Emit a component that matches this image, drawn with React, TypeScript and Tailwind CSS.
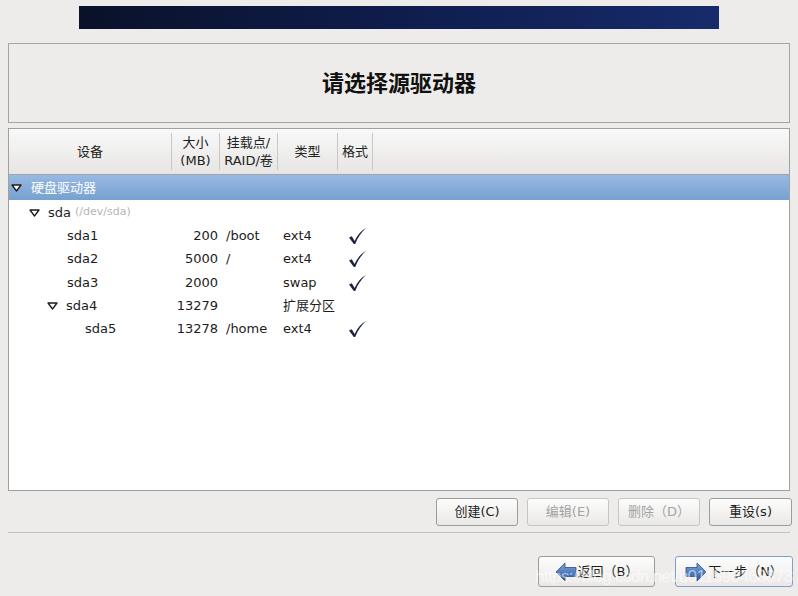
import React from "react";

const font = { fontFamily: '"DejaVu Sans", "Noto Sans CJK SC", sans-serif' };

function Tri({ white = false }: { white?: boolean }) {
  return (
    <svg width="11" height="8" viewBox="0 0 11 8" className="shrink-0">
      <polygon
        points="1,1 10,1 5.5,7"
        fill={white ? "#ffffff" : "none"}
        stroke="#1c1c1c"
        strokeWidth="1.3"
        strokeLinejoin="round"
      />
    </svg>
  );
}

function Check() {
  return (
    <svg width="19" height="18" viewBox="0 0 19 18">
      <path d="M1 10.5 L3.8 9.2 L6.6 14 C9.5 8 13 3.5 18 1 C13.5 5 10 10 7.2 17 L5.8 17 Z" fill="#1d2340" />
    </svg>
  );
}

function Arrow({ dir }: { dir: "left" | "right" }) {
  return (
    <svg width="22" height="20" viewBox="0 0 22 20" className={dir === "left" ? "" : "-scale-x-100"}>
      <defs>
        <linearGradient id={"ag" + dir} x1="0" y1="0" x2="0" y2="1">
          <stop offset="0" stopColor="#7aa5dc" />
          <stop offset="1" stopColor="#2b5a9c" />
        </linearGradient>
      </defs>
      <polygon points="1,10 10,1 10,5.5 21,5.5 21,14.5 10,14.5 10,19" fill={"url(#ag" + dir + ")"} stroke="#2a4f86" strokeWidth="0.8" />
    </svg>
  );
}

type Row = { indent: number; tri?: boolean; name: string; extra?: string; size?: string; mount?: string; type?: string; fmt?: boolean };

const rows: Row[] = [
  { indent: 20, tri: true, name: "sda", extra: "(/dev/sda)" },
  { indent: 58, name: "sda1", size: "200", mount: "/boot", type: "ext4", fmt: true },
  { indent: 58, name: "sda2", size: "5000", mount: "/", type: "ext4", fmt: true },
  { indent: 58, name: "sda3", size: "2000", type: "swap", fmt: true },
  { indent: 38, tri: true, name: "sda4", size: "13279", type: "扩展分区" },
  { indent: 76, name: "sda5", size: "13278", mount: "/home", type: "ext4", fmt: true },
];

function Btn({ children, disabled = false, className = "" }: { children: React.ReactNode; disabled?: boolean; className?: string }) {
  return (
    <button
      className={
        "flex items-center justify-center rounded-[3px] border bg-gradient-to-b from-[#fdfdfd] to-[#e9e8e6] text-[13px] " +
        (disabled ? "border-[#c6c6c4] text-[#a3a3a1] " : "border-[#9c9c9a] text-[#1e1e1e] ") +
        className
      }
    >
      {children}
    </button>
  );
}

export default function App() {
  return (
    <div className="relative w-[798px] h-[596px] bg-[#edecea] flex flex-col overflow-hidden" style={font}>
      <div className="mt-[6px] mx-auto w-[640px] h-[23px] bg-gradient-to-r from-[#0a1129] via-[#0f1d4d] to-[#172b6b]" />

      <div className="mt-[14px] mx-[8px] h-[80px] border border-[#a4a4a2] flex items-center justify-center">
        <h1 className="text-[22px] font-bold text-[#111]">请选择源驱动器</h1>
      </div>

      <div className="mt-[5px] mx-[8px] h-[363px] border border-[#a0a09e] bg-white flex flex-col">
        <div className="h-[46px] border-b border-[#a3a3a1] bg-gradient-to-b from-[#f9f9f9] to-[#e6e5e3] flex text-[13px] text-[#222] leading-[18px]">
          <div className="w-[162px] flex items-center justify-center">设备</div>
          <div className="w-[48px] flex items-center justify-center border-l border-[#c9c8c6] my-[4px] text-center">
            大小<br />(MB)
          </div>
          <div className="w-[58px] flex items-center justify-center border-l border-[#c9c8c6] my-[4px] text-center">
            挂载点/<br />RAID/卷
          </div>
          <div className="w-[60px] flex items-center justify-center border-l border-[#c9c8c6] my-[4px]">类型</div>
          <div className="w-[36px] flex items-center justify-center border-l border-[#c9c8c6] border-r my-[4px]">格式</div>
        </div>

        <div className="h-[25px] bg-gradient-to-b from-[#98b9e3] to-[#76a1cf] flex items-center pl-[2px] gap-[9px] text-[13px] text-white">
          <Tri white />
          <span>硬盘驱动器</span>
        </div>

        <div className="mt-[1px] flex flex-col">
          {rows.map((r) => (
            <div key={r.name} className="h-[23.3px] flex items-center text-[13px] text-[#1c1c1c]">
              <div className="w-[163px] flex items-center" style={{ paddingLeft: r.indent }}>
                {r.tri && <span className="mr-[8px] flex"><Tri /></span>}
                <span>{r.name}</span>
                {r.extra && <span className="ml-[4px] text-[11px] text-[#b4b4b4]">{r.extra}</span>}
              </div>
              <div className="w-[46px] text-right">{r.size}</div>
              <div className="w-[58px] pl-[8px]">{r.mount}</div>
              <div className="w-[64px] pl-[7px]">{r.type}</div>
              <div className="w-[40px] pl-[8px] flex">{r.fmt && <Check />}</div>
            </div>
          ))}
        </div>
      </div>

      <div className="mt-[7px] mr-[6px] flex justify-end gap-[9px]">
        <Btn className="w-[82px] h-[28px]">创建(C)</Btn>
        <Btn disabled className="w-[82px] h-[28px]">编辑(E)</Btn>
        <Btn disabled className="w-[82px] h-[28px]">删除（D）</Btn>
        <Btn className="w-[83px] h-[28px]">重设(s)</Btn>
      </div>

      <div className="mt-[6px] mx-[8px] border-t border-[#c4c3c1]" />

      <div className="mt-[23px] mr-[5px] flex justify-end gap-[20px]">
        <Btn className="w-[117px] h-[31px] gap-[1px]">
          <Arrow dir="left" />
          <span>返回（B）</span>
        </Btn>
        <Btn className="w-[118px] h-[31px] gap-[1px] !border-[#7f9ec8]">
          <Arrow dir="right" />
          <span>下一步（N）</span>
        </Btn>
      </div>

      <div
        className="absolute left-[535px] top-[564px] text-[17px] tracking-[-0.6px] text-white/55 whitespace-nowrap pointer-events-none"
        style={{ fontFamily: '"Liberation Sans", sans-serif' }}
      >
        https://blog.csdn.net/u011590468873
      </div>
    </div>
  );
}
